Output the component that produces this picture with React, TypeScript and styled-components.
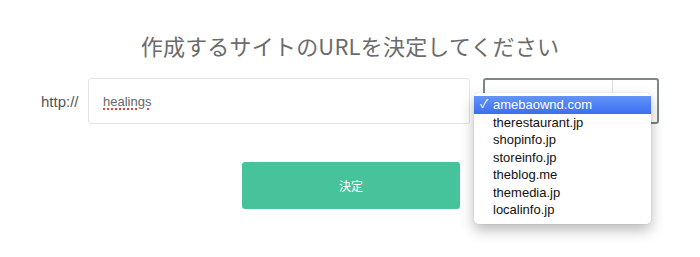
import styled, { createGlobalStyle } from "styled-components";

const GlobalStyle = createGlobalStyle`
  html, body {
    margin: 0;
    padding: 0;
    background: #ffffff;
    font-family: "Liberation Sans", "Noto Sans CJK JP", Arial, sans-serif;
  }
`;

const Page = styled.div`
  width: 700px;
  height: 257px;
  display: flex;
  flex-direction: column;
  align-items: center;
  padding-top: 30px;
  box-sizing: border-box;
`;

const Title = styled.h1`
  margin: 0;
  font-size: 22px;
  font-weight: 400;
  line-height: 31px;
  color: #6b6b6b;
  font-family: "Noto Sans CJK JP", "Liberation Sans", sans-serif;
  letter-spacing: 0.2px;
`;

const FormRow = styled.div`
  width: 100%;
  display: flex;
  align-items: center;
  margin-top: 17px;
  padding-left: 41px;
  box-sizing: border-box;
`;

const Prefix = styled.span`
  width: 47px;
  font-size: 15px;
  color: #555;
`;

const TextField = styled.div`
  width: 382px;
  height: 46px;
  box-sizing: border-box;
  border: 1px solid #e4e4e4;
  border-radius: 3px;
  display: flex;
  align-items: center;
  padding-left: 14px;
  font-size: 13px;
  color: #666;
`;

const Misspelled = styled.span`
  text-decoration: underline dotted #e0453c;
  text-decoration-thickness: 2px;
  text-underline-offset: 3px;
`;

const SelectBox = styled.div`
  position: relative;
  margin-left: 13px;
  width: 176px;
  height: 46px;
  box-sizing: border-box;
  border: 2px solid #7b8886;
  border-radius: 3px;
  display: flex;
  justify-content: flex-end;
`;

const ArrowCell = styled.div`
  width: 44px;
  border-left: 1px solid #e2e2e2;
`;

const Menu = styled.ul`
  position: absolute;
  left: -11px;
  top: 13px;
  width: 177px;
  margin: 0;
  padding: 3px 0 5px;
  list-style: none;
  background: rgba(255, 255, 255, 0.97);
  border-radius: 5px;
  box-shadow: 0 6px 14px rgba(0, 0, 0, 0.28), 0 0 1px rgba(0, 0, 0, 0.25);
  z-index: 2;
`;

const Option = styled.li<{ $selected?: boolean }>`
  position: relative;
  height: 17.5px;
  line-height: 17.5px;
  padding-left: 19px;
  font-size: 13px;
  color: ${(p) => (p.$selected ? "#ffffff" : "#111")};
  background: ${(p) =>
    p.$selected ? "linear-gradient(#6494f7, #3b6ef0)" : "transparent"};
`;

const Check = styled.span`
  position: absolute;
  left: 6px;
  top: 0;
  font-size: 12px;
`;

const SubmitButton = styled.button`
  margin-top: 38px;
  margin-left: 2px;
  width: 218px;
  height: 47px;
  border: none;
  border-radius: 3px;
  background: #47c39c;
  color: #ffffff;
  font-size: 12px;
  font-family: "Noto Sans CJK JP", sans-serif;
`;

const domains = [
  "amebaownd.com",
  "therestaurant.jp",
  "shopinfo.jp",
  "storeinfo.jp",
  "theblog.me",
  "themedia.jp",
  "localinfo.jp",
];

export default function App() {
  return (
    <>
      <GlobalStyle />
      <Page>
        <Title>作成するサイトのURLを決定してください</Title>
        <FormRow>
          <Prefix>http://</Prefix>
          <TextField>
            <Misspelled>healings</Misspelled>
          </TextField>
          <SelectBox>
            <ArrowCell />
            <Menu>
              {domains.map((d, i) => (
                <Option key={d} $selected={i === 0}>
                  {i === 0 && <Check>✓</Check>}
                  {d}
                </Option>
              ))}
            </Menu>
          </SelectBox>
        </FormRow>
        <SubmitButton>決定</SubmitButton>
      </Page>
    </>
  );
}
